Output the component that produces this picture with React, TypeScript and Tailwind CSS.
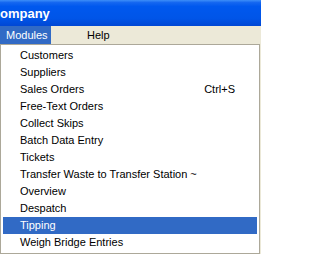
const items = [
  { label: "Customers" },
  { label: "Suppliers" },
  { label: "Sales Orders", shortcut: "Ctrl+S" },
  { label: "Free-Text Orders" },
  { label: "Collect Skips" },
  { label: "Batch Data Entry" },
  { label: "Tickets" },
  { label: "Transfer Waste to Transfer Station ~" },
  { label: "Overview" },
  { label: "Despatch" },
  { label: "Tipping", active: true },
  { label: "Weigh Bridge Entries" },
];

export default function App() {
  return (
    <div className="w-[261px] h-[254px] overflow-hidden bg-[#ECE9D8] font-['Liberation_Sans',Arial,sans-serif] text-[11px] text-black">
      {/* Title bar */}
      <div className="h-[26px] overflow-hidden flex items-center bg-[linear-gradient(to_bottom,#3D8EF8_0%,#1466F0_10%,#0058EE_25%,#0055E8_70%,#0047D4_100%)]">
        <span className="pt-[1px] text-[13px] font-bold text-white whitespace-nowrap">ompany</span>
      </div>

      {/* Menu bar */}
      <div className="h-[18px] flex items-center">
        <div className="h-full w-[51px] bg-[#316AC5] text-white flex items-center pl-[6px]">Modules</div>
        <div className="ml-[36px]">Help</div>
      </div>

      {/* Dropdown */}
      <div className="w-[260px] h-[210px] bg-white border border-[#ACA899] pt-[2px] px-[2px]">
        {items.map((item) => (
          <div
            key={item.label}
            className={
              "h-[17px] flex items-center justify-between pl-[17px] pr-[22px] whitespace-nowrap " +
              (item.active ? "bg-[#316AC5] text-white" : "")
            }
          >
            <span>{item.label}</span>
            {item.shortcut && <span>{item.shortcut}</span>}
          </div>
        ))}
      </div>
    </div>
  );
}
